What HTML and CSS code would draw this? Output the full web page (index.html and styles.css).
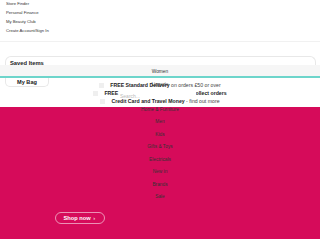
FILE: index.html
```html
<!DOCTYPE html>
<html lang="en">
<head>
    <meta charset="UTF-8">
    <meta name="viewport" content="width=device-width, initial-scale=1.0">
    <title>Boots</title>
    <link rel="stylesheet" href="styles.css">
</head>
<body>
    <ul class="top-links">
        <li><a href="#">Store Finder</a></li>
        <li><a href="#">Personal Finance</a></li>
        <li><a href="#">My Beauty Club</a></li>
        <li><a href="#">Create Account/Sign In</a></li>
    </ul>

    <div class="saved">Saved Items</div>
    <div class="nav-band"></div>

    <div class="promo">
        <div class="bag">My Bag</div>
        <ul class="delivery">
            <li><span class="tick"></span><b>FREE Standard Delivery</b> on orders £50 or over</li>
            <li><span class="tick"></span><b>FREE Next Day Delivery on Click &amp; Collect orders</b></li>
            <li><span class="tick"></span><b>Credit Card and Travel Money</b> - find out more</li>
        </ul>
        <div class="search">Search...</div>
    </div>

    <div class="hero">
        <a class="shop-now" href="#">Shop now <span class="chev">›</span></a>
    </div>

    <ul class="menu">
        <li>Women</li>
        <li>Lingerie</li>
        <li>Beauty</li>
        <li>Home &amp; Furniture</li>
        <li>Men</li>
        <li>Kids</li>
        <li>Gifts &amp; Toys</li>
        <li>Electricals</li>
        <li>New in</li>
        <li>Brands</li>
        <li>Sale</li>
    </ul>
</body>
</html>
```

FILE: styles.css
```css
body {
    font-family: "Liberation Sans", Arial, sans-serif;
    margin: 0;
    padding: 0;
    background-color: #fff;
    color: #333;
    position: relative;
    overflow: hidden;
}
ul {
    list-style: none;
    margin: 0;
    padding: 0;
}
.top-links {
    height: 42px;
    padding: 0.4px 6px 0;
    box-sizing: border-box;
    border-bottom: 1px solid #f1f1f1;
    font-size: 4.2px;
    line-height: 8.7px;
}
.top-links a {
    color: #333;
    text-decoration: none;
}
.saved {
    margin: 14px 4px 0 5px;
    height: 5px;
    padding: 3px 0 0 4px;
    border: 1px solid #e8e8e8;
    border-bottom: none;
    border-radius: 6px 6px 0 0;
    font-size: 5.8px;
    font-weight: bold;
    line-height: 6px;
    color: #222;
}
.nav-band {
    height: 11px;
    background-color: #f6f6f6;
    border-bottom: 2px solid #6dd5cb;
}
.promo {
    position: relative;
    display: grid;
    grid-template-columns: 1fr auto 1fr;
    height: 29px;
}
.bag {
    justify-self: start;
    margin-left: 5px;
    width: 42px;
    height: 8px;
    border: 1px solid #e8e8e8;
    border-top: none;
    border-radius: 0 0 5px 5px;
    text-align: center;
    font-size: 5.6px;
    font-weight: bold;
    line-height: 9px;
    color: #222;
}
.delivery {
    grid-column: 2;
    padding-top: 3px;
    font-size: 5.2px;
    line-height: 8px;
    text-align: center;
    white-space: nowrap;
    color: #444;
}
.delivery b {
    color: #222;
}
.tick {
    display: inline-block;
    width: 5px;
    height: 5px;
    margin-right: 6px;
    background-color: #efefef;
    vertical-align: -1px;
}
.search {
    position: absolute;
    top: 11px;
    left: 119px;
    width: 76px;
    height: 6px;
    padding: 4px 0 0 1px;
    background-color: #fff;
    color: #bbb;
    font-size: 5px;
    line-height: 6px;
    z-index: 2;
}
.hero {
    height: 132px;
    padding: 104.5px 0 0 55px;
    box-sizing: border-box;
    background-color: #d60b5a;
}
.shop-now {
    display: block;
    width: 50px;
    height: 12px;
    box-sizing: border-box;
    padding-left: 7.5px;
    border: 1px solid rgba(255, 255, 255, 0.55);
    border-radius: 7px;
    color: #fff;
    font-size: 5.7px;
    font-weight: bold;
    line-height: 10px;
    text-decoration: none;
}
.shop-now .chev {
    font-weight: normal;
    margin-left: 1px;
}
.menu {
    position: absolute;
    top: 66px;
    left: 0;
    right: 0;
    text-align: center;
    font-size: 4.8px;
    line-height: 12.5px;
    color: #333;
    z-index: 1;
}
```
